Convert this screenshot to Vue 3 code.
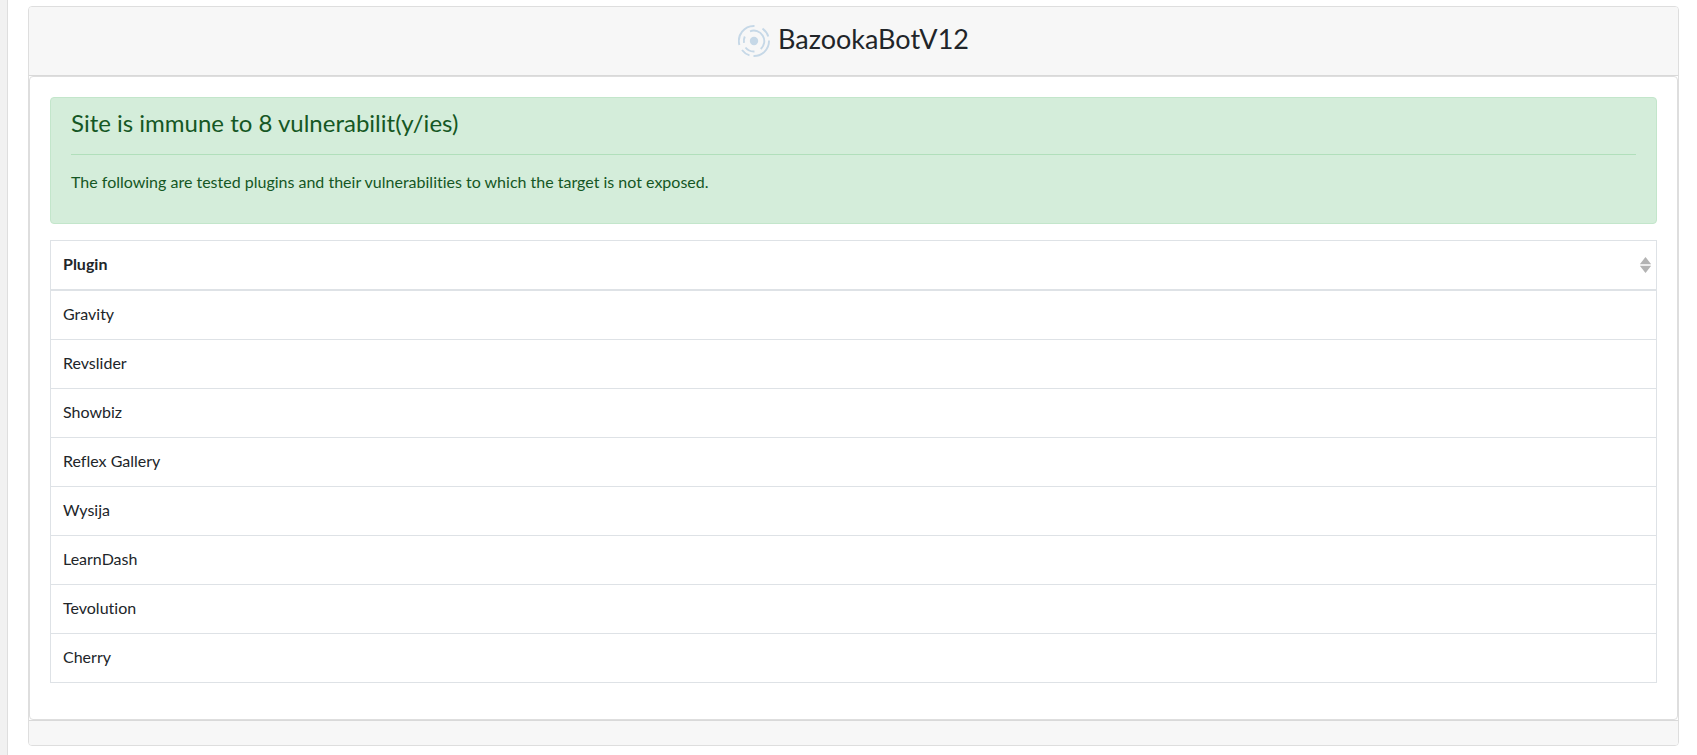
<script setup>
import { ref, computed } from 'vue'

const tested = ['Gravity', 'Revslider', 'Showbiz', 'Reflex Gallery', 'Wysija', 'LearnDash', 'Tevolution', 'Cherry']
const order = ref(0)
const plugins = computed(() => {
  if (order.value === 0) return tested
  return [...tested].sort((a, b) => order.value * a.localeCompare(b))
})
function toggleSort() {
  order.value = order.value === 1 ? -1 : 1
}
</script>

<template>
  <div class="layout">
    <aside class="rail"></aside>
    <main class="content">
      <article class="card">
        <header class="card-header">
          <svg class="logo" viewBox="0 0 32 32" aria-hidden="true">
            <circle cx="16" cy="16" r="4.2" fill="#c6d8e7" />
            <g fill="none" stroke="#c6d8e7" stroke-width="1.9">
              <path d="M1.400 20A15 15 0 0 1 16.500 1" />
              <path d="M24.500 3.600A15 15 0 0 1 30.300 11.500" />
              <path d="M31 15.500A15 15 0 0 1 15.500 31" />
              <path d="M11.500 30.300A15 15 0 0 1 4 25" />
              <path d="M12 6.300A10.500 10.500 0 0 1 22.700 24" />
              <path d="M6 17.800A10.500 10.500 0 0 1 6.800 11.500" />
              <path d="M16.500 26.500A10.500 10.500 0 0 1 7.500 22.500" />
            </g>
          </svg>
          <h1 class="title">BazookaBotV12</h1>
        </header>
        <section class="card-body">
          <div class="alert" role="status">
            <h2 class="alert-heading">Site is immune to 8 vulnerabilit(y/ies)</h2>
            <hr class="divider" />
            <p class="alert-text">The following are tested plugins and their vulnerabilities to which the target is not exposed.</p>
          </div>
          <table class="plugins">
            <thead>
              <tr>
                <th scope="col">
                  <button class="sort" type="button" @click="toggleSort">
                    <span>Plugin</span>
                    <svg class="arrows" viewBox="0 0 11 16" aria-hidden="true">
                      <path d="M5.500 0L11 7H0z" fill="#b3b3b3" />
                      <path d="M0 7h11v2H0z" fill="#ececec" />
                      <path d="M0 9h11L5.500 16z" fill="#b3b3b3" />
                    </svg>
                  </button>
                </th>
              </tr>
            </thead>
            <tbody>
              <tr v-for="plugin in plugins" :key="plugin">
                <td>{{ plugin }}</td>
              </tr>
            </tbody>
          </table>
        </section>
        <footer class="card-footer"></footer>
      </article>
    </main>
  </div>
</template>

<style>
body {
  margin: 0;
  background: #fff;
}
</style>

<style scoped>
.layout {
  display: flex;
  min-height: 100vh;
  color: #212529;
  font: 400 16px/22px "Proxima Nova", Lato, sans-serif;
  font-variant-ligatures: none;
}
.rail {
  flex: none;
  width: 7px;
  background: #f1f1f1;
  border-right: 1px solid #dedede;
}
.content {
  flex: 1;
  min-width: 0;
  padding: 6px 18px 9px 20px;
}
.card {
  border: 1px solid #dedede;
  border-radius: 4px;
  background: #fff;
}
.card-header {
  display: flex;
  align-items: center;
  justify-content: center;
  gap: 8px;
  padding: 12px 20px;
  min-height: 44px;
  background: #f7f7f7;
  border-bottom: 1px solid #d9d9d9;
  border-radius: 3px 3px 0 0;
}
.logo {
  flex: none;
  width: 32px;
  height: 32px;
}
.title {
  margin: 0;
  padding-bottom: 4px;
  font-size: 27px;
  line-height: 34px;
  font-weight: 400;
}
.card-body {
  padding: 20px 20px 36px;
  border: 1px solid #dedede;
  border-radius: 4px;
}
.alert {
  margin-bottom: 16px;
  padding: 12px 20px;
  color: #155724;
  background: #d4edda;
  border: 1px solid #c3e6cb;
  border-radius: 4px;
}
.alert-heading {
  margin: 0;
  font-size: 24px;
  line-height: 26px;
  font-weight: 400;
}
.divider {
  margin: 18px 0 16px;
  border: 0;
  border-top: 1px solid #b1dfbb;
}
.alert-text {
  margin: 0 0 18px;
}
.plugins {
  width: 100%;
  border: 1px solid #dee2e6;
  border-collapse: separate;
  border-spacing: 0;
}
th {
  padding: 0;
  border-bottom: 2px solid #dee2e6;
}
td {
  padding: 12px 12px 14px;
  border-bottom: 1px solid #dee2e6;
}
tr:last-child td {
  border-bottom: 0;
}
.sort {
  display: flex;
  align-items: center;
  justify-content: space-between;
  width: 100%;
  min-height: 48px;
  padding: 0 5px 0 12px;
  color: inherit;
  background: none;
  border: 0;
  font: inherit;
  font-weight: 700;
  text-align: left;
  cursor: pointer;
}
.sort span {
  padding-bottom: 2px;
}
.arrows {
  width: 11px;
  height: 16px;
}
.card-footer {
  min-height: 24px;
  background: #f7f7f7;
  border-top: 1px solid #d9d9d9;
  border-radius: 0 0 3px 3px;
}
</style>
